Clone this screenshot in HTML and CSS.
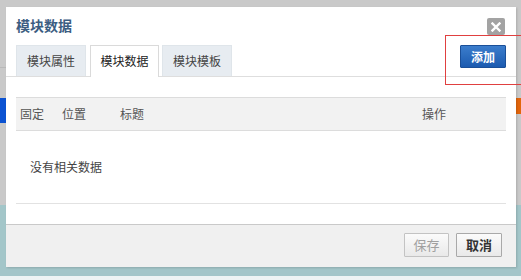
FILE: index.html
```html
<!DOCTYPE html>
<html lang="zh-CN">
<head>
<meta charset="utf-8">
<title>模块数据</title>
<link rel="stylesheet" href="styles.css">
</head>
<body>
<div class="dialog">
  <div class="dlg-head">
    <div class="dlg-title">模块数据</div>
    <button class="dlg-close" aria-label="关闭">
      <svg width="10" height="10" viewBox="0 0 10 10"><path d="M1.5 1.5 L8.5 8.5 M8.5 1.5 L1.5 8.5" stroke="#fff" stroke-width="2.4" stroke-linecap="square"/></svg>
    </button>
  </div>
  <div class="tabbar">
    <div class="tab">模块属性</div>
    <div class="tab active">模块数据</div>
    <div class="tab">模块模板</div>
    <button class="btn-add">添加</button>
  </div>
  <div class="dlg-body">
    <div class="grid">
      <div class="grid-head">
        <div class="col c-fix">固定</div>
        <div class="col c-pos">位置</div>
        <div class="col c-title">标题</div>
        <div class="col c-op">操作</div>
      </div>
      <div class="grid-empty">没有相关数据</div>
    </div>
  </div>
  <div class="dlg-foot">
    <button class="btn btn-save" disabled>保存</button>
    <button class="btn btn-cancel">取消</button>
  </div>
  <div class="highlight"></div>
</div>
</body>
</html>
```

FILE: styles.css
```css
html {
  overflow: hidden;
}
body {
  margin: 0;
  width: 521px;
  height: 280px;
  overflow: hidden;
  font-family: "Noto Sans CJK SC", "Noto Sans", sans-serif;
  font-size: 12px;
  color: #333;
  background:
    linear-gradient(#0b52d2, #0b52d2) 0 98px / 6px 25px no-repeat,
    linear-gradient(#e2650c, #e2650c) 516px 98px / 5px 16px no-repeat,
    linear-gradient(#b9b9b9, #b9b9b9) 0 67px / 6px 1px no-repeat,
    linear-gradient(to bottom, #c9c9c9 0, #c9c9c9 205px, #a3c6c9 205px, #a3c6c9 276px, #eef4f4 276px);
}
.dialog {
  position: relative;
  margin: 7px 0 0 6px;
  width: 510px;
  height: 260px;
  background: #fff;
  display: flex;
  flex-direction: column;
  box-shadow: 1px 1px 2px rgba(0, 0, 0, 0.15);
}
.dlg-head {
  display: flex;
  align-items: flex-start;
  justify-content: space-between;
  height: 30px;
  padding: 8px 11px 0 10px;
}
.dlg-title {
  font-size: 14px;
  line-height: 20px;
  font-weight: bold;
  color: #3c5d82;
}
.dlg-close {
  margin-top: 3px;
  width: 18px;
  height: 17px;
  padding: 0;
  border: 0;
  border-radius: 2px;
  background: #a3a3a3;
  display: flex;
  align-items: center;
  justify-content: center;
}
.tabbar {
  display: flex;
  align-items: flex-start;
  gap: 3px;
  height: 31px;
  padding: 0 10px;
  border-bottom: 1px solid #dedede;
}
.tab {
  width: 68px;
  height: 30px;
  line-height: 30px;
  text-align: center;
  background: #e7ecf1;
  border: 1px solid #dfe5ea;
  border-bottom: 0;
  color: #444;
  font-size: 12px;
}
.tab.active {
  background: #fff;
  border-color: #dadada;
  height: 31px;
  color: #222;
  width: 67px;
  margin-left: 1px;
}
.btn-add {
  margin-left: auto;
  width: 46px;
  height: 23px;
  padding: 0;
  border: 1px solid #1a4f98;
  border-radius: 1px;
  background: linear-gradient(#3b7dcc, #1c5bb0);
  color: #fff;
  font-family: inherit;
  font-size: 12px;
  font-weight: bold;
  line-height: 21px;
}
.dlg-body {
  padding: 20px 10px 0;
  height: 107px;
  margin-bottom: 20px;
}
.grid-head {
  display: flex;
  height: 32px;
  line-height: 32px;
  background: #f2f2f2;
  border-top: 1px solid #dcdcdc;
  border-bottom: 1px solid #dcdcdc;
  color: #555;
}
.col {
  padding-left: 4px;
}
.c-fix { width: 38px; }
.c-pos { width: 54px; }
.c-title { flex: 1; }
.c-op { width: 84px; }
.grid-empty {
  height: 72px;
  line-height: 72px;
  padding-left: 14px;
  border-bottom: 1px solid #e2e2e2;
  color: #444;
}
.dlg-foot {
  flex: 1;
  display: flex;
  justify-content: flex-end;
  align-items: flex-start;
  gap: 7px;
  padding: 8px 14px 0 0;
  background: #f0f0f0;
  border-top: 1px solid #c9c9c9;
}
.btn {
  height: 24px;
  width: 45px;
  padding: 0;
  font-family: inherit;
  font-size: 13px;
  line-height: 22px;
  border: 1px solid #c3c3c3;
  border-radius: 1px;
  background: linear-gradient(#fbfbfb, #e9e9e9);
}
.btn-save {
  color: #a0a0a0;
}
.btn-cancel {
  width: 46px;
  color: #333;
  font-weight: bold;
  border-color: #a9a9a9;
}
.highlight {
  position: absolute;
  left: 439px;
  top: 28px;
  width: 90px;
  height: 48px;
  border: 1px solid #e04040;
  pointer-events: none;
}
```
